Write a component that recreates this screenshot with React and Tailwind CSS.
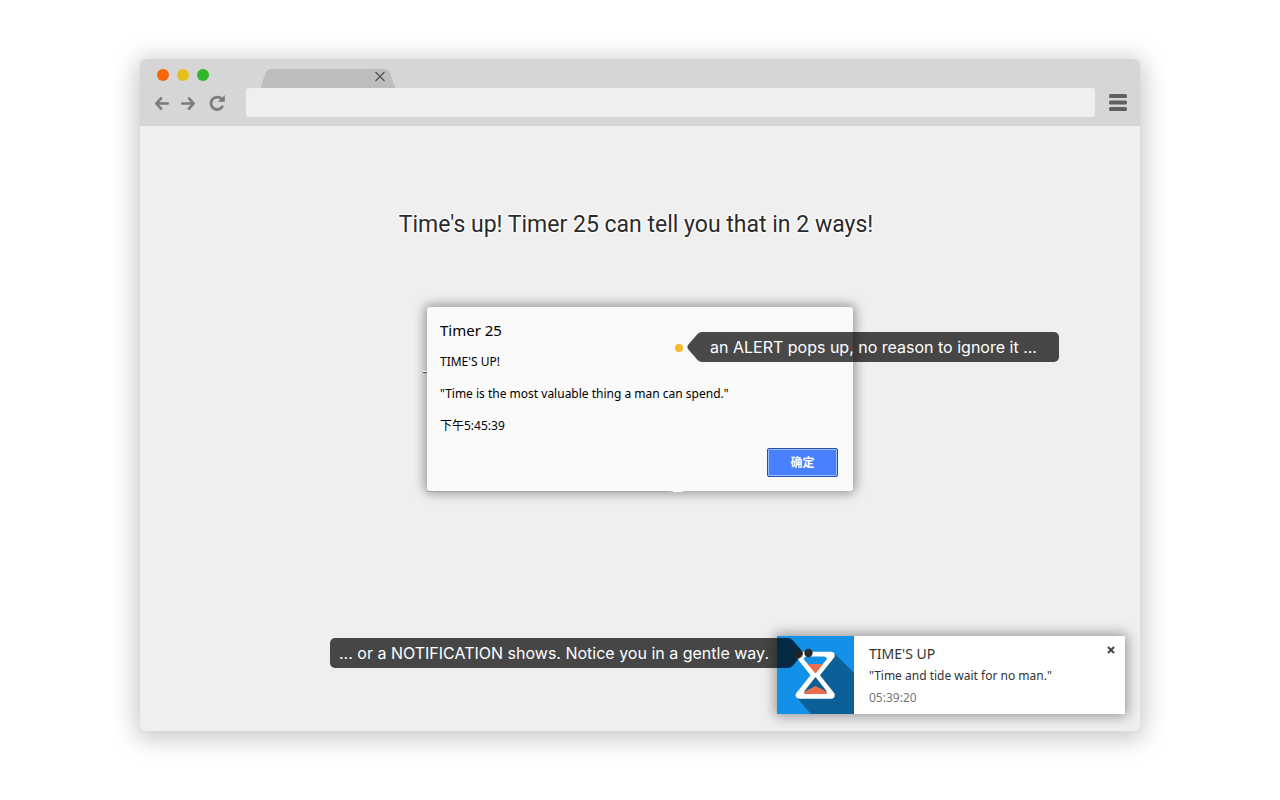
function Toolbar() {
  return (
    <header className="bg-[#d6d6d6] px-[13px] pt-[9px] pb-[9px]">
      <div className="flex h-5 items-end">
        <div className="flex gap-2 self-start pt-[1px] pl-1">
          <button aria-label="Close window" className="size-3 rounded-full bg-[#f4660a]" />
          <button aria-label="Minimize window" className="size-3 rounded-full bg-[#e7bf1a]" />
          <button aria-label="Maximize window" className="size-3 rounded-full bg-[#30b52b]" />
        </div>
        <div className="relative ml-[51px] h-[19px] w-[136px]">
          <svg viewBox="0 0 136 19" className="block h-[19px] w-[136px]" fill="#bebebe" aria-hidden="true">
            <path d="M0.500 19 L5 5 Q7 0 11.500 0 H124 Q128.500 0 130.500 5 L135.500 19 Z" />
          </svg>
          <button aria-label="Close tab" className="absolute top-[2px] right-[10px] size-3">
            <svg viewBox="0 0 12 12" className="block size-3" stroke="#4c4c4c" strokeWidth="1.100" fill="none">
              <path d="M1.500 1 L10.500 10 M10.500 1 L1.500 10" />
            </svg>
          </button>
        </div>
      </div>
      <div className="flex items-center">
        <nav className="flex w-[93px] shrink-0 gap-2" aria-label="History">
          <button aria-label="Back">
            <svg viewBox="0 0 18 18" className="block size-[18px]" fill="none" stroke="#7b7b7b" strokeWidth="2.600" strokeLinecap="round" strokeLinejoin="round">
              <path d="M14.800 9.500 H4 M8 4.300 L3.300 9.500 L8 14.700" />
            </svg>
          </button>
          <button aria-label="Forward">
            <svg viewBox="0 0 18 18" className="block size-[18px]" fill="none" stroke="#7b7b7b" strokeWidth="2.600" strokeLinecap="round" strokeLinejoin="round">
              <path d="M3.200 9.500 H14 M10 4.300 L14.700 9.500 L10 14.700" />
            </svg>
          </button>
          <button aria-label="Reload" className="pl-[3px]">
            <svg viewBox="0 0 18 18" className="block size-[18px]" fill="none">
              <path d="M14.300 12.800 A6.200 6.200 0 1 1 13.600 4.900" stroke="#7b7b7b" strokeWidth="2.800" strokeLinecap="round" />
              <path d="M16.800 1 V7.800 H10 Z" fill="#7b7b7b" />
            </svg>
          </button>
        </nav>
        <input aria-label="Address" className="h-[29px] min-w-0 flex-1 rounded-[3px] bg-[#efefef] px-2 text-sm outline-none" />
        <button aria-label="Menu" className="ml-[14px] shrink-0">
          <svg viewBox="0 0 18 18" className="block size-[18px]" fill="#606060">
            <rect x="0" y="0" width="18" height="4" rx="1.500" />
            <rect x="0" y="6.500" width="18" height="4" rx="1.500" />
            <rect x="0" y="13" width="18" height="4" rx="1.500" />
          </svg>
        </button>
      </div>
    </header>
  );
}

function AlertDialog() {
  return (
    <section
      role="dialog"
      aria-labelledby="alert-title"
      className="relative mx-auto mt-[66px] w-[426px] max-w-full rounded-[3px] bg-[#fafafa] pt-[11px] pr-[15px] pb-[14px] pl-[13px] font-['Noto_Sans','Noto_Sans_CJK_SC',sans-serif] text-xs text-black shadow-[0_0_12px_2px_rgba(0,0,0,0.4)]"
    >
      <h2 id="alert-title" className="text-[15px] leading-6">Timer 25</h2>
      <p className="mt-3 leading-4">TIME'S UP!</p>
      <p className="mt-4 leading-4">"Time is the most valuable thing a man can spend."</p>
      <p className="mt-4 leading-4">下午5:45:39</p>
      <div className="mt-[14px] flex justify-end">
        <button className="h-[29px] w-[71px] rounded-[2px] border border-[#2450b0] bg-[#4880ff] font-bold text-white shadow-[inset_0_0_0_1px_#9dbcff]">确定</button>
      </div>
      <span aria-hidden="true" className="absolute top-16 -left-1 h-[2px] w-1 border-b border-[#444] bg-white" />
      <span aria-hidden="true" className="absolute top-full left-0 h-px w-[242px] bg-[#a3a6a4]" />
      <span aria-hidden="true" className="absolute top-full left-[246px] h-px w-[10px] bg-white" />
      <div className="absolute top-[25px] left-[248px] flex items-center font-['Inter',sans-serif] text-base whitespace-nowrap text-white">
        <span className="mt-[2px] mr-1 size-2 rounded-full bg-[#f7b72b]" />
        <svg viewBox="0 0 15 30" className="h-[30px] w-[15px]" fill="#000" fillOpacity="0.71" aria-hidden="true">
          <path d="M15 0 Q12.500 0 10.500 2 L1 13 Q-0.200 15 1 17 L10.500 28 Q12.500 30 15 30 Z" />
        </svg>
        <p className="h-[30px] w-[357px] rounded-r-[5px] bg-black/71 pl-2 leading-[30px]">an ALERT pops up, no reason to ignore it ...</p>
      </div>
    </section>
  );
}

function Hourglass() {
  return (
    <svg viewBox="0 0 77 78" className="block h-[78px] w-[77px] shrink-0" aria-hidden="true">
      <rect width="77" height="78" fill="#1390e8" />
      <path d="M57 17 L77 37 V78 H34 L20 62 L38 39 Z" fill="#0c5f97" />
      <path d="M22.500 19.500 H54 L22.500 59 H54 Z" fill="none" stroke="#fff" strokeWidth="7.500" strokeLinejoin="round" />
      <path d="M26.500 23 Q27 20.500 29.500 20.500 H46.500 Q49.500 20.500 50 23 L38.500 37 Z" fill="#1390e8" />
      <path d="M30.500 28 H46 L38.500 37.500 Z" fill="#e96d4b" />
      <path d="M27.500 57.500 V55 L38.500 41 L49.500 55 V57.500 Z" fill="#0c5f97" />
      <path d="M27 58 Q27.500 55 30.500 54 L38.500 50 L46.500 54 Q49.500 55 50 58 Z" fill="#e96d4b" />
      <circle cx="22" cy="18" r="4" fill="#777" />
      <circle cx="31.500" cy="17" r="4.200" fill="#2c2c2c" />
    </svg>
  );
}

function Notification() {
  return (
    <section
      aria-label="Notification"
      className="relative mt-auto mr-[15px] mb-[17px] ml-auto flex w-[348px] bg-white font-['Noto_Sans',sans-serif] shadow-[0_0_12px_2px_rgba(0,0,0,0.38)]"
    >
      <Hourglass />
      <div className="flex-1 pt-2 pl-[15px]">
        <h2 className="text-sm leading-5 text-[#333]">TIME'S UP</h2>
        <p className="mt-1 text-xs leading-4 text-[#333]">"Time and tide wait for no man."</p>
        <p className="mt-[6px] text-xs leading-4 text-[#777]">05:39:20</p>
      </div>
      <button aria-label="Dismiss" className="mt-[10px] mr-[10px] size-2 shrink-0">
        <svg viewBox="0 0 8 8" className="block size-2" stroke="#444" strokeWidth="2" fill="none">
          <path d="M1 1 L7 7 M7 1 L1 7" />
        </svg>
      </button>
      <div className="absolute top-[2px] right-[322px] flex font-['Inter',sans-serif] text-base whitespace-nowrap text-white">
        <p className="h-[30px] w-[458px] rounded-l-[5px] bg-black/71 pl-[9px] leading-[30px]">... or a NOTIFICATION shows. Notice you in a gentle way.</p>
        <svg viewBox="0 0 15 30" className="h-[30px] w-[15px]" fill="#000" fillOpacity="0.71" aria-hidden="true">
          <path d="M0 0 Q2.500 0 4.500 2 L14 13 Q15.200 15 14 17 L4.500 28 Q2.500 30 0 30 Z" />
        </svg>
      </div>
    </section>
  );
}

export default function App() {
  return (
    <div className="min-h-screen bg-white px-6 pt-[59px] pb-[69px]">
      <main className="mx-auto flex min-h-[672px] w-full max-w-[1000px] flex-col overflow-hidden rounded-md bg-[#efefef] shadow-[0_4px_24px_4px_rgba(0,0,0,0.22)]">
        <Toolbar />
        <h1 className="mt-[83px] -ml-2 text-center font-['Roboto',sans-serif] text-[23px] leading-8 text-[#2b2b2b] [text-shadow:0_0_2px_#fff,0_0_2px_#fff,0_0_2px_#fff,0_0_3px_#fff,0_0_3px_#fff,0_0_3px_#fff]">
          Time's up! Timer 25 can tell you that in 2 ways!
        </h1>
        <AlertDialog />
        <Notification />
      </main>
    </div>
  );
}
